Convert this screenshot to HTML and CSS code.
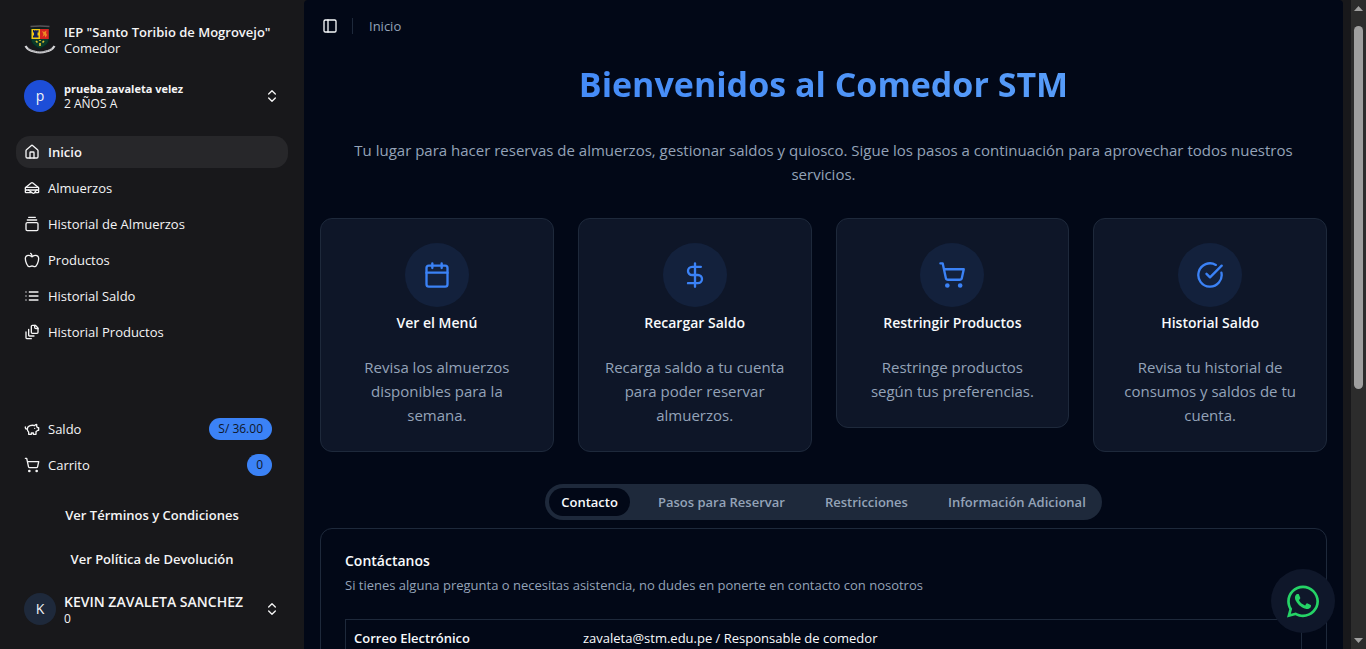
FILE: index.html
```html
<!DOCTYPE html>
<html lang="es">
<head>
<meta charset="utf-8">
<title>Comedor STM</title>
<meta name="viewport" content="width=device-width, initial-scale=1">
<link rel="stylesheet" href="styles.css">
</head>
<body>
<div class="app">
  <aside class="sidebar">
    <div class="identity">
      <svg class="crest" viewBox="0 0 32 32" aria-hidden="true">
        <path d="M6.500 2.500Q16 1.500 25.500 2.500" stroke="#55555a" stroke-width="1.500" fill="none"/>
        <path d="M7 4.500H25V15Q25 21 16 24.500Q7 21 7 15Z" fill="#0b3a2a" stroke="#07251d"/>
        <path d="M7.500 5H16V15H7.500Z" fill="#f2c714"/>
        <path d="M16 5H24.800V15H16Z" fill="#d52321"/>
        <path d="M9 6H10.500V7H11.200V6H12.600V7H13.300V6H14.500V8.500H13.500V11.500H14.500V13.500H9V11.500H10V8.500H9Z" fill="#10205c"/>
        <path d="M18 7L20 8L22.500 6.500L22 9L23 11L21.500 13.500L20.500 11L18.500 13L19.500 10Z" fill="#f08a24"/>
        <path d="M12 17L13.500 18.500M20 17L18.500 18.500M16 19V22M16 16V17" stroke="#e0c42c" stroke-width="1.700" fill="none"/>
        <path d="M1.500 22Q4 26.500 10 27.500Q16 29.500 22 27.500Q28 26.500 30.500 22" stroke="#d5d5d8" stroke-width="2.200" fill="none"/>
        <path d="M4 24.500Q9 28 16 28Q23 28 28 24.500" stroke="#77777b" stroke-width="1" stroke-dasharray="1 1" fill="none"/>
      </svg>
      <div class="identity-text"><strong class="school">IEP "Santo Toribio de Mogrovejo"</strong><span class="unit">Comedor</span></div>
    </div>

    <button class="person" type="button">
      <span class="avatar avatar-blue">p</span>
      <span class="person-text"><strong class="person-small">prueba zavaleta velez</strong><span class="person-detail">2 AÑOS A</span></span>
      <svg class="icon" viewBox="0 0 24 24"><path d="m7 15 5 5 5-5M7 9l5-5 5 5"/></svg>
    </button>

    <nav class="menu menu-main" aria-label="Principal">
      <a class="menu-item menu-current" href="#inicio"><svg class="icon" viewBox="0 0 24 24"><path d="M15 21v-8a1 1 0 0 0-1-1h-4a1 1 0 0 0-1 1v8"/><path d="M3 10a2 2 0 0 1 .709-1.528l7-5.999a2 2 0 0 1 2.582 0l7 5.999A2 2 0 0 1 21 10v9a2 2 0 0 1-2 2H5a2 2 0 0 1-2-2z"/></svg>Inicio</a>
      <a class="menu-item" href="#almuerzos"><svg class="icon" viewBox="0 0 24 24"><path d="m2.370 11.223 8.372-6.777a2 2 0 0 1 2.516 0l8.371 6.777M21 15a1 1 0 0 1 1 1v2a1 1 0 0 1-1 1h-5.250M3 15a1 1 0 0 0-1 1v2a1 1 0 0 0 1 1h9M6.670 15l6.130 4.600a2 2 0 0 0 2.800-.4l3.150-4.200"/><rect width="20" height="4" x="2" y="11" rx="1"/></svg>Almuerzos</a>
      <a class="menu-item" href="#historial-almuerzos"><svg class="icon" viewBox="0 0 24 24"><path d="M7 2h10M5 6h14"/><rect width="18" height="12" x="3" y="10" rx="2"/></svg>Historial de Almuerzos</a>
      <a class="menu-item" href="#productos"><svg class="icon" viewBox="0 0 24 24"><path d="M12 20.940c1.500 0 2.750 1.060 4 1.060 3 0 6-8 6-12.220A4.910 4.910 0 0 0 17 5c-2.220 0-4 1.440-5 2-1-.56-2.780-2-5-2a4.900 4.900 0 0 0-5 4.780C2 14 5 22 8 22c1.250 0 2.500-1.060 4-1.060Z"/><path d="M10 2c1 .5 2 2 2 5"/></svg>Productos</a>
      <a class="menu-item" href="#historial-saldo"><svg class="icon" viewBox="0 0 24 24"><path d="M3 6h.01M3 12h.01M3 18h.01M8 6h13M8 12h13M8 18h13"/></svg>Historial Saldo</a>
      <a class="menu-item" href="#historial-productos"><svg class="icon" viewBox="0 0 24 24"><path d="M21 7h-3a2 2 0 0 1-2-2V2"/><path d="M21 6v6.500c0 .8-.7 1.500-1.500 1.500h-7c-.8 0-1.500-.7-1.500-1.500v-9c0-.8.7-1.500 1.500-1.500H17Z"/><path d="M7 8v8.800c0 .3.2.6.4.8.2.2.5.4.8.4H15M3 12v8.800c0 .3.2.6.4.8.2.2.5.4.8.4H11"/></svg>Historial Productos</a>
    </nav>

    <nav class="menu" aria-label="Cuenta">
      <a class="menu-item" href="#saldo"><svg class="icon" viewBox="0 0 24 24"><path d="M19 5c-1.500 0-2.800 1.400-3 2-3.500-1.500-11-.3-11 5 0 1.800 0 3 2 4.500V20h4v-2h3v2h4v-4c1-.5 1.700-1 2-2h2v-4h-2c0-1-.5-1.500-1-2V5zM2 9v1c0 1.100.9 2 2 2h1M16 11h.01"/></svg>Saldo<span class="pill">S/ 36.00</span></a>
      <a class="menu-item" href="#carrito"><svg class="icon" viewBox="0 0 24 24"><circle cx="8" cy="21" r="1"/><circle cx="19" cy="21" r="1"/><path d="M2.050 2.050h2l2.660 12.420a2 2 0 0 0 2 1.580h9.780a2 2 0 0 0 1.950-1.570l1.650-7.430H5.120"/></svg>Carrito<span class="pill">0</span></a>
    </nav>

    <div class="legal">
      <button class="legal-button" type="button">Ver Términos y Condiciones</button>
      <button class="legal-button" type="button">Ver Política de Devolución</button>
    </div>

    <button class="person" type="button">
      <span class="avatar">K</span>
      <span class="person-text"><strong class="person-name">KEVIN ZAVALETA SANCHEZ</strong><span class="person-detail">0</span></span>
      <svg class="icon" viewBox="0 0 24 24"><path d="m7 15 5 5 5-5M7 9l5-5 5 5"/></svg>
    </button>
  </aside>

  <main class="content">
    <header class="topbar">
      <button class="toggle" type="button" aria-label="Alternar barra lateral"><svg class="icon" viewBox="0 0 24 24"><rect width="18" height="18" x="3" y="3" rx="2"/><path d="M9 3v18"/></svg></button>
      <span class="divider"></span>
      <a class="crumb" href="#inicio">Inicio</a>
    </header>

    <h1 class="title">Bienvenidos al Comedor STM</h1>
    <p class="lead">Tu lugar para hacer reservas de almuerzos, gestionar saldos y quiosco. Sigue los pasos a continuación para aprovechar todos nuestros servicios.</p>

    <section class="cards">
      <article class="card">
        <span class="card-badge"><svg class="icon icon-large" viewBox="0 0 24 24"><path d="M8 2v4M16 2v4M3 10h18"/><rect width="18" height="18" x="3" y="4" rx="2"/></svg></span>
        <h2 class="card-title">Ver el Menú</h2>
        <p class="card-text">Revisa los almuerzos disponibles para la semana.</p>
      </article>
      <article class="card">
        <span class="card-badge"><svg class="icon icon-large" viewBox="0 0 24 24"><path d="M12 2v20M17 5H9.500a3.500 3.500 0 0 0 0 7h5a3.500 3.500 0 0 1 0 7H6"/></svg></span>
        <h2 class="card-title">Recargar Saldo</h2>
        <p class="card-text">Recarga saldo a tu cuenta para poder reservar almuerzos.</p>
      </article>
      <article class="card">
        <span class="card-badge"><svg class="icon icon-large" viewBox="0 0 24 24"><circle cx="8" cy="21" r="1"/><circle cx="19" cy="21" r="1"/><path d="M2.050 2.050h2l2.660 12.420a2 2 0 0 0 2 1.580h9.780a2 2 0 0 0 1.950-1.570l1.650-7.430H5.120"/></svg></span>
        <h2 class="card-title">Restringir Productos</h2>
        <p class="card-text">Restringe productos según tus preferencias.</p>
      </article>
      <article class="card">
        <span class="card-badge"><svg class="icon icon-large" viewBox="0 0 24 24"><path d="M21.801 10A10 10 0 1 1 17 3.335M9 11l3 3L22 4"/></svg></span>
        <h2 class="card-title">Historial Saldo</h2>
        <p class="card-text">Revisa tu historial de consumos y saldos de tu cuenta.</p>
      </article>
    </section>

    <div class="tabs" role="tablist">
      <button class="tab tab-active" type="button" role="tab" aria-selected="true">Contacto</button>
      <button class="tab" type="button" role="tab" aria-selected="false">Pasos para Reservar</button>
      <button class="tab" type="button" role="tab" aria-selected="false">Restricciones</button>
      <button class="tab" type="button" role="tab" aria-selected="false">Información Adicional</button>
    </div>

    <section class="panel">
      <h2 class="panel-title">Contáctanos</h2>
      <p class="panel-text">Si tienes alguna pregunta o necesitas asistencia, no dudes en ponerte en contacto con nosotros</p>
      <table class="contact">
        <tbody><tr><th class="contact-label" scope="row">Correo Electrónico</th><td class="contact-value">zavaleta@stm.edu.pe / Responsable de comedor</td></tr></tbody>
      </table>
    </section>
  </main>

  <div class="scrollbar" aria-hidden="true">
    <svg class="arrow" viewBox="0 0 9 5"><path d="M4.500 0L9 5H0Z"/></svg>
    <span class="thumb"></span>
    <svg class="arrow arrow-down" viewBox="0 0 9 5"><path d="M0 0H9L4.500 5Z"/></svg>
  </div>

  <a class="chat" href="#whatsapp" aria-label="WhatsApp">
    <svg class="chat-icon" viewBox="0 0 448 512"><path d="M380.900 97.100C339 55.100 283.200 32 223.900 32c-122.400 0-222 99.600-222 222 0 39.100 10.200 77.300 29.600 111L0 480l117.700-30.900c32.400 17.700 68.900 27 106.100 27h.1c122.300 0 224.100-99.600 224.100-222 0-59.300-25.200-115-67.100-157zm-157 341.600c-33.200 0-65.700-8.900-94-25.700l-6.700-4-69.800 18.300L72 359.200l-4.400-7c-18.500-29.400-28.200-63.300-28.200-98.200 0-101.700 82.800-184.500 184.600-184.500 49.300 0 95.600 19.200 130.400 54.100 34.800 34.900 56.200 81.200 56.100 130.500 0 101.800-84.900 184.600-186.600 184.600zm101.200-138.200c-5.500-2.800-32.800-16.200-37.900-18-5.100-1.900-8.800-2.800-12.500 2.800-3.700 5.600-14.300 18-17.600 21.800-3.200 3.700-6.500 4.200-12 1.400-32.600-16.300-54-29.100-75.500-66-5.700-9.800 5.700-9.100 16.300-30.300 1.800-3.700.9-6.900-.5-9.700-1.400-2.800-12.500-30.100-17.100-41.200-4.500-10.800-9.100-9.300-12.500-9.500-3.200-.2-6.900-.2-10.600-.2-3.700 0-9.700 1.400-14.800 6.900-5.100 5.600-19.400 19-19.400 46.300 0 27.300 19.900 53.700 22.600 57.400 2.800 3.700 39.100 59.700 94.800 83.800 35.200 15.200 49 16.500 66.600 13.900 10.700-1.600 32.800-13.400 37.400-26.400 4.600-13 4.600-24.100 3.200-26.400-1.300-2.500-5-3.900-10.500-6.600z"/></svg>
  </a>
</div>
</body>
</html>
```
FILE: styles.css
```css
* { box-sizing: border-box; }

body {
  margin: 0;
  background: #18181b;
  color: #f8fafc;
  font-family: "Open Sans", "Noto Sans", sans-serif;
  font-size: 14px;
  line-height: 20px;
}

h1, h2, p { margin: 0; }
a { color: inherit; text-decoration: none; }
button { padding: 0; border: 0; background: none; color: inherit; font: inherit; cursor: pointer; }

.app {
  display: grid;
  grid-template-columns: 304px minmax(0, 1fr) 15px;
  height: 100vh;
  overflow: hidden;
}

.icon {
  flex: none;
  width: 16px;
  height: 16px;
  fill: none;
  stroke: currentColor;
  stroke-width: 2;
  stroke-linecap: round;
  stroke-linejoin: round;
}
.icon-large { width: 28px; height: 28px; }

/* Sidebar */
.sidebar {
  display: flex;
  flex-direction: column;
  padding: 16px;
  color: #f4f4f5;
}
.identity, .person {
  display: flex;
  align-items: center;
  gap: 8px;
  min-height: 48px;
  padding: 0 8px;
  text-align: left;
}
.crest { flex: none; width: 32px; height: 32px; }
.identity { margin-bottom: 8px; }
.identity-text, .person-text { display: flex; flex-direction: column; flex: 1; white-space: nowrap; line-height: 16px; }
.school { font-size: 13px; font-weight: 600; }
.person-name { font-size: 14px; font-weight: 600; line-height: 20px; }
.unit { font-size: 13px; }
.person-small { font-size: 11px; font-weight: 700; line-height: 16px; }
.person-detail { font-size: 12px; line-height: 14px; }
.avatar {
  display: grid;
  place-items: center;
  flex: none;
  width: 32px;
  height: 32px;
  border-radius: 50%;
  background: #1e293b;
}
.avatar-blue { background: #1d4ed8; }

.menu { display: flex; flex-direction: column; gap: 4px; }
.menu-main { margin: 16px 0 auto; }
.menu-item {
  display: flex;
  align-items: center;
  gap: 8px;
  height: 32px;
  padding: 0 8px;
  border-radius: 14px;
  font-size: 13px;
}
.menu-current { background: #27272a; font-weight: 600; }
.pill {
  margin: 0 8px 0 auto;
  padding: 2px 9px;
  border-radius: 11px;
  background: #3b82f6;
  color: #0f172a;
  font-size: 12px;
  line-height: 18px;
}
.legal { display: flex; flex-direction: column; align-items: center; gap: 8px; padding: 16px 0 8px; }
.legal-button { height: 36px; font-size: 13px; font-weight: 600; }

/* Main column */
.content {
  margin-right: 8px;
  padding: 0 16px;
  border-radius: 4px 4px 0 0;
  background: #020817;
  overflow: hidden;
}
.topbar { display: flex; align-items: center; gap: 16px; height: 52px; }
.toggle { display: grid; place-items: center; width: 16px; height: 28px; margin-left: 2px; }
.divider { width: 1px; height: 16px; margin-left: -2px; background: #1e293b; }
.crumb { color: #94a3b8; font-size: 13px; }

.title {
  padding: 12px 0 34px;
  background: linear-gradient(90deg, #3b82f6, #60a5fa);
  background-clip: text;
  -webkit-background-clip: text;
  color: transparent;
  text-align: center;
  font-size: 34px;
  font-weight: 700;
  line-height: 40px;
}
.lead { padding: 0 16px; color: #94a3b8; text-align: center; font-size: 15px; line-height: 24px; }

.cards { display: grid; grid-template-columns: repeat(4, minmax(0, 1fr)); align-items: start; gap: 24px; margin: 32px 0; }
.card {
  display: flex;
  flex-direction: column;
  align-items: center;
  padding: 24px;
  border: 1px solid #1e293b;
  border-radius: 12px;
  background: #0e1628;
  text-align: center;
}
.card-badge { display: grid; place-items: center; width: 64px; height: 64px; border-radius: 50%; background: #13213c; color: #3b82f6; }
.card-title { margin: 4px 0 20px; font-size: 14px; font-weight: 600; line-height: 24px; }
.card-text { color: #94a3b8; font-size: 15px; line-height: 24px; }

.tabs { display: flex; width: fit-content; margin: 0 auto 8px; padding: 4px; gap: 16px; border-radius: 18px; background: #1e293b; }
.tab { height: 28px; padding: 0 12px; border-radius: 14px; color: #94a3b8; font-size: 13px; font-weight: 600; }
.tab-active { background: #020817; color: #f8fafc; }

.panel { padding: 20px 24px 24px; border: 1px solid #1e293b; border-radius: 12px; }
.panel-title { font-size: 14px; font-weight: 600; line-height: 24px; }
.panel-text { color: #94a3b8; font-size: 13px; line-height: 24px; }
.contact { width: 100%; margin-top: 22px; border: 1px solid #1e293b; border-collapse: collapse; font-size: 13px; }
.contact-label, .contact-value { padding: 8px; text-align: left; }
.contact-label { width: 24%; font-weight: 600; }

/* Window scrollbar */
.scrollbar { display: flex; flex-direction: column; align-items: center; padding: 6px 0; background: #2c2c2c; }
.arrow { width: 9px; height: 5px; fill: #a0a0a0; }
.thumb { width: 9px; height: 56vh; margin-top: 15px; border-radius: 5px; background: #9f9f9f; }
.arrow-down { margin-top: auto; }

.chat {
  position: fixed;
  right: 31px;
  bottom: 16px;
  display: grid;
  place-items: center;
  width: 64px;
  height: 64px;
  border-radius: 50%;
  background: #0f172a;
}
.chat-icon { width: 32px; height: 37px; fill: #25d366; }
```
